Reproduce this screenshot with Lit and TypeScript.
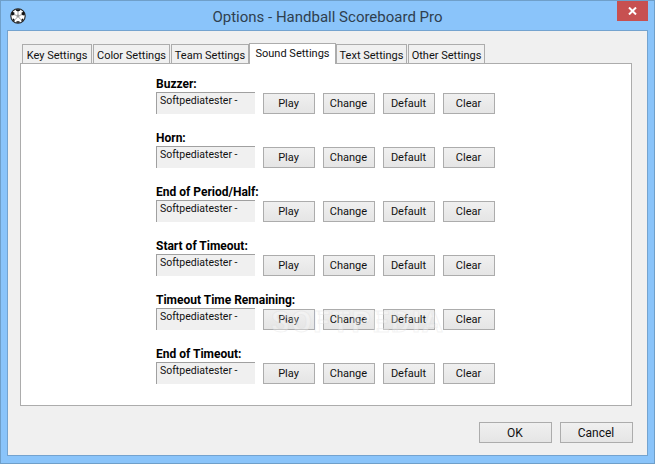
import { LitElement, html, css } from "lit";
import { customElement } from "lit/decorators.js";

const SOUNDS = ["Buzzer:", "Horn:", "End of Period/Half:", "Start of Timeout:", "Timeout Time Remaining:", "End of Timeout:"];
const TABS = ["Key Settings", "Color Settings", "Team Settings", "Sound Settings", "Text Settings", "Other Settings"];
const ACTIONS = ["Play", "Change", "Default", "Clear"];

@customElement("app-root")
export class AppRoot extends LitElement {
  static styles = css`
    :host { display: block; width: 655px; height: 464px; overflow: hidden; font-family: Roboto, "Noto Sans", sans-serif; font-size: 11px; color: #111; }
    .win { position: relative; box-sizing: border-box; width: 655px; height: 464px; background: #8ac4fa; border: 1px solid #6f9fc9; display: flex; flex-direction: column; }
    .titlebar { height: 29px; flex: none; display: flex; align-items: center; justify-content: center; position: relative; font-size: 15px; color: #2f3f4f; }
    .titlebar .t { position: relative; top: 1px; }
    .ico { position: absolute; left: 9px; top: 7px; }
    .close { position: absolute; left: 616px; top: 0; width: 31px; height: 20px; background: #c75050; display: flex; align-items: center; justify-content: center; }
    .client { box-sizing: border-box; margin: 0 6px 0 6px; width: 641px; height: 426px; background: #f0f0f0; border: 1px solid #74a3cf; padding: 12px 0 0 12px; display: flex; flex-direction: column; }
    .tabs { display: flex; height: 20px; align-items: flex-end; padding-left: 2px; flex: none; position: relative; z-index: 1; }
    .tab { box-sizing: border-box; height: 19px; border: 1px solid #acacac; border-bottom: none; background: #f0f0f0; margin-right: 1px; padding-top: 2px; text-align: center; white-space: nowrap; line-height: 17px; }
    .tab.on { height: 21px; background: #fff; margin: 0 0 -1px -1px; padding-top: 1px; line-height: 17px; }
    .tab.after { margin-left: 0; }
    .panel { box-sizing: border-box; width: 612px; height: 343px; background: #fff; border: 1px solid #acacac; padding: 11px 0 0 135px; display: flex; flex-direction: column; gap: 14px; }
    .row { height: 40px; display: flex; flex-direction: column; }
    .lbl { font-weight: 700; font-size: 12px; height: 17px; line-height: 18px; color: #000; }
    .ctrls { display: flex; align-items: flex-start; }
    .box { box-sizing: border-box; width: 99px; height: 22px; background: #f0f0f0; border-left: 1px solid #a0a0a0; border-top: 1px solid #a0a0a0; padding: 1px 0 0 3px; font-size: 10.5px; line-height: 14px; white-space: nowrap; margin-right: 8px; }
    .btns { display: flex; gap: 8px; padding-top: 1px; }
    .btn { box-sizing: border-box; width: 52px; height: 21px; border: 1px solid #acacac; background: linear-gradient(#f0f0f0, #e5e5e5); display: flex; align-items: center; justify-content: center; padding: 0 1px 0 0; }
    .foot { display: flex; justify-content: flex-end; gap: 8px; padding: 16px 14px 0 0; }
    .foot .btn { width: 73px; height: 21px; font-size: 12px; }
    .wm { position: absolute; left: 270px; top: 303px; font-size: 30px; letter-spacing: 1.5px; font-weight: 700; color: rgba(255,255,255,.3); -webkit-text-stroke: 1px rgba(215,215,215,.3); white-space: nowrap; pointer-events: none; }
  `;

  render() {
    return html`<div class="win">
      <div class="titlebar">
        <svg class="ico" width="16" height="16" viewBox="0 0 16 16">
          <circle cx="8" cy="8" r="7.2" fill="#fff" stroke="#222" stroke-width="1.1"/>
          <path d="M8 6 9.8 7.3 9.1 9.4H6.9L6.2 7.3Z" fill="#999"/>
          <path d="M8 3.4V6M9.8 7.3 12.2 6.5M9.1 9.4 10.6 11.6M6.9 9.4 5.4 11.6M6.2 7.3 3.8 6.5" stroke="#777" stroke-width=".7" fill="none"/>
          <path d="M6 1.2H10L10.2 2.4 8 3.6 5.8 2.4ZM11.6 4.4 14 3.8 14.8 7 13 7.4 11.6 6.2ZM4.4 4.4 2 3.8 1.2 7 3 7.4 4.4 6.2ZM3 10.2 4.8 11.8 4.4 13.6 2.4 12ZM13 10.2 11.2 11.8 11.6 13.6 13.6 12ZM6.6 13.2H9.4L9.8 14.8H6.2Z" fill="#111"/>
        </svg>
        <span class="t">Options - Handball Scoreboard Pro</span>
        <div class="close">
          <svg width="9" height="8" viewBox="0 0 9 8"><path d="M1 0.5 8 7.5M8 0.5 1 7.5" stroke="#fff" stroke-width="2" fill="none"/></svg>
        </div>
      </div>
      <div class="client">
        <div class="tabs">
          ${TABS.map((t, i) => html`<div class="tab ${i === 3 ? "on" : ""} ${i === 4 ? "after" : ""}" style="width:${[70, 77, 78, 87, 71, 77][i]}px">${t}</div>`)}
        </div>
        <div class="panel">
          ${SOUNDS.map((s) => html`<div class="row">
            <div class="lbl">${s}</div>
            <div class="ctrls">
              <div class="box">Softpediatester -</div>
              <div class="btns">${ACTIONS.map((a) => html`<div class="btn">${a}</div>`)}</div>
            </div>
          </div>`)}
        </div>
        <div class="foot"><div class="btn">OK</div><div class="btn">Cancel</div></div>
      </div>
      <div class="wm">SOFTPEDIA</div>
    </div>`;
  }
}
